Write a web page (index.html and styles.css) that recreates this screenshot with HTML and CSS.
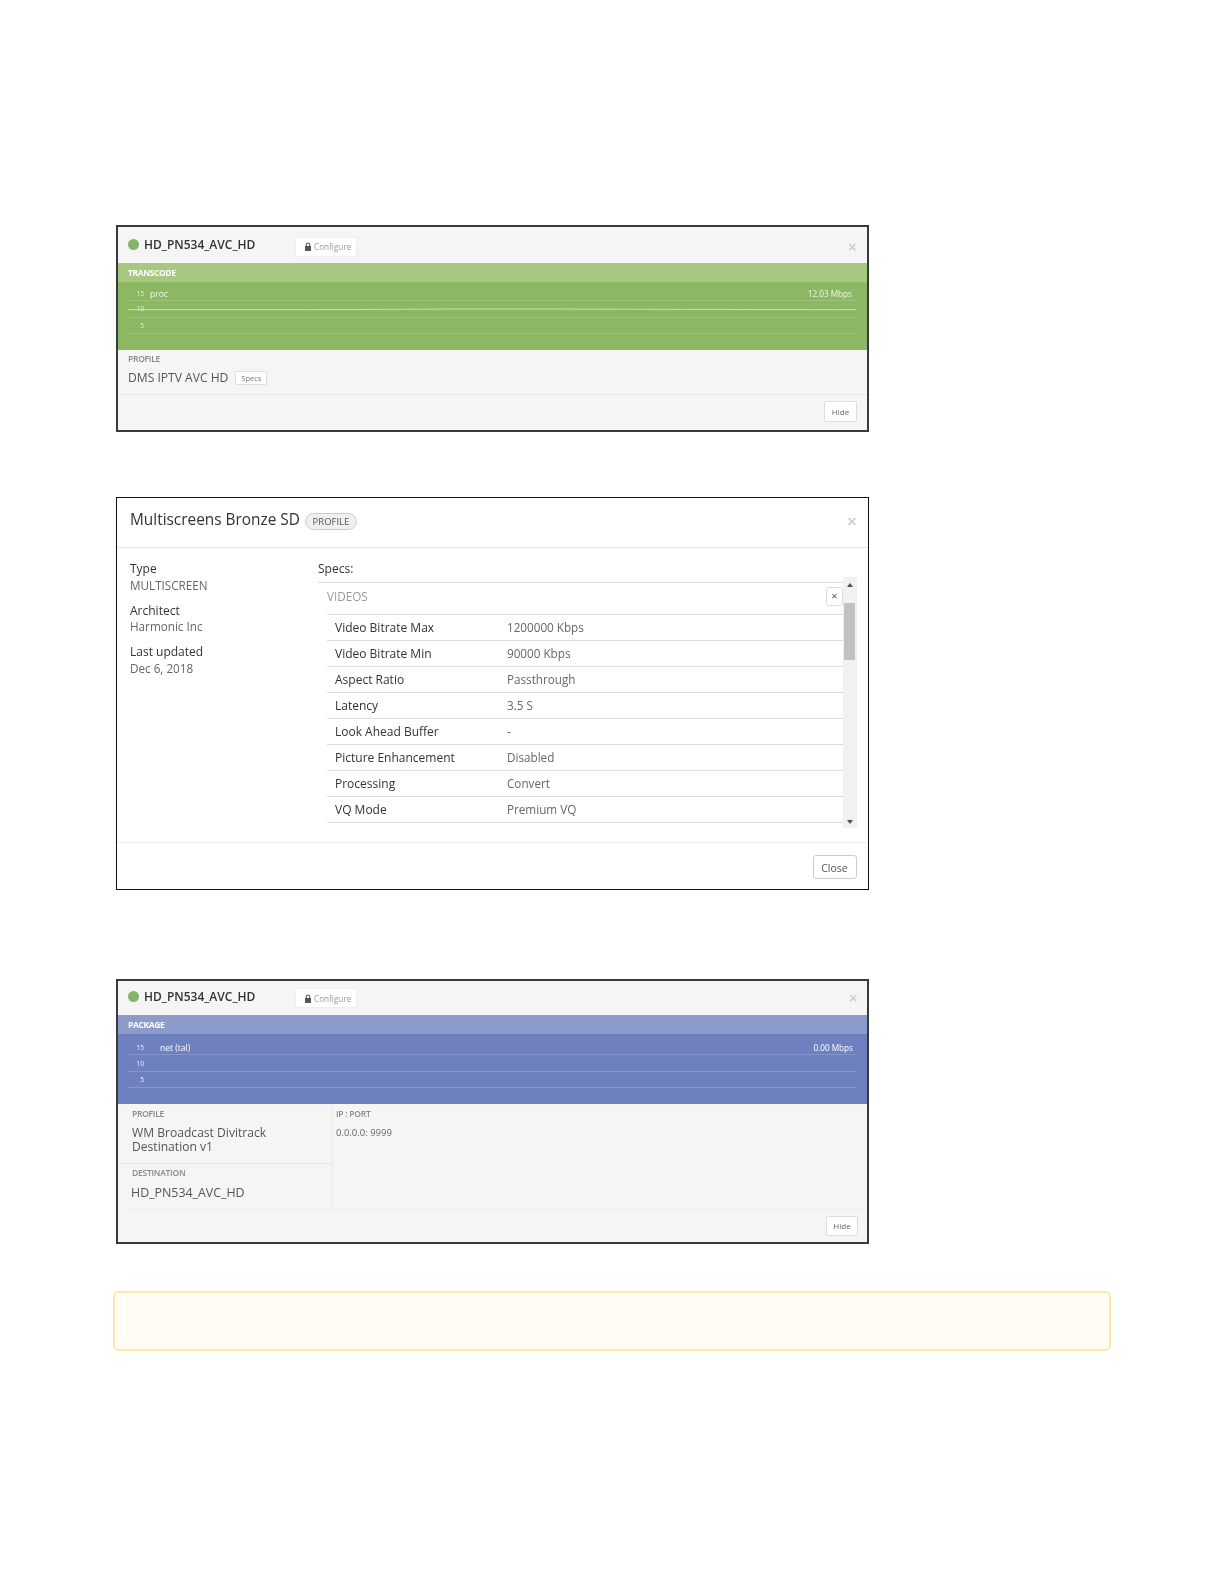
FILE: index.html
```html
<!DOCTYPE html>
<html lang="en">
<head>
<meta charset="utf-8">
<title>Service panels</title>
<link rel="stylesheet" href="styles.css">
</head>
<body>
<main class="page">

  <section class="shot panel panel-transcode">
    <header class="panel-head">
      <span class="dot"></span>
      <span class="panel-title">HD_PN534_AVC_HD</span>
      <span class="config">
        <svg class="lock" viewBox="0 0 8 9"><path d="M1.8 4V2.6a2.2 2.2 0 0 1 4.4 0V4h.8v5H1V4zM2.9 4h2.2V2.6a1.1 1.1 0 0 0-2.2 0z" fill="#555"/></svg>
        Configure
      </span>
      <span class="close">×</span>
    </header>
    <div class="band">TRANSCODE</div>
    <div class="chart">
      <svg class="trace" viewBox="0 0 728 3" preserveAspectRatio="none"><path d="M0 1.6H160C280 1.6 300 .8 400 1C500 1.2 600 1.6 728 1.6" fill="none" stroke="#c9dfae" stroke-width="1"/></svg>
      <div class="grow r1"><span class="tick">15</span><span class="series">proc</span><span class="rate">12.03 Mbps</span></div>
      <div class="grow r2"><span class="tick">10</span></div>
      <div class="grow r3"><span class="tick">5</span></div>
    </div>
    <div class="profile">
      <div class="cap">PROFILE</div>
      <div class="profile-line"><span class="big">DMS IPTV AVC HD</span><span class="specs">Specs</span></div>
    </div>
    <footer class="panel-foot"><span class="hide">Hide</span></footer>
  </section>

  <section class="shot modal">
    <header class="modal-head">
      <h2 class="modal-title">Multiscreens Bronze SD</h2>
      <span class="badge">PROFILE</span>
      <span class="close close-modal">×</span>
    </header>
    <div class="modal-body">
      <div class="meta">
        <dl class="meta-item"><dt>Type</dt><dd>MULTISCREEN</dd></dl>
        <dl class="meta-item"><dt>Architect</dt><dd>Harmonic Inc</dd></dl>
        <dl class="meta-item"><dt>Last updated</dt><dd>Dec 6, 2018</dd></dl>
      </div>
      <div class="specs-col">
        <div class="specs-label">Specs:</div>
        <div class="specs-scroll">
          <div class="specs-content">
            <div class="videos-head"><span>VIDEOS</span><span class="mini-x">×</span></div>
            <div class="row"><span class="k">Video Bitrate Max</span><span class="v">1200000 Kbps</span></div>
            <div class="row"><span class="k">Video Bitrate Min</span><span class="v">90000 Kbps</span></div>
            <div class="row"><span class="k">Aspect Ratio</span><span class="v">Passthrough</span></div>
            <div class="row"><span class="k">Latency</span><span class="v">3.5 S</span></div>
            <div class="row"><span class="k">Look Ahead Buffer</span><span class="v">-</span></div>
            <div class="row"><span class="k">Picture Enhancement</span><span class="v">Disabled</span></div>
            <div class="row"><span class="k">Processing</span><span class="v">Convert</span></div>
            <div class="row"><span class="k">VQ Mode</span><span class="v">Premium VQ</span></div>
          </div>
          <div class="scrollbar">
            <span class="arrow arrow-up"></span>
            <span class="thumb"></span>
            <span class="arrow arrow-down"></span>
          </div>
        </div>
      </div>
    </div>
    <footer class="modal-foot"><span class="btn-close">Close</span></footer>
  </section>

  <section class="shot panel panel-package">
    <header class="panel-head">
      <span class="dot"></span>
      <span class="panel-title">HD_PN534_AVC_HD</span>
      <span class="config">
        <svg class="lock" viewBox="0 0 8 9"><path d="M1.8 4V2.6a2.2 2.2 0 0 1 4.4 0V4h.8v5H1V4zM2.9 4h2.2V2.6a1.1 1.1 0 0 0-2.2 0z" fill="#555"/></svg>
        Configure
      </span>
      <span class="close">×</span>
    </header>
    <div class="band">PACKAGE</div>
    <div class="chart">
      <div class="grow r1"><span class="tick">15</span><span class="series">net (tal)</span><span class="rate">0.00 Mbps</span></div>
      <div class="grow r2"><span class="tick">10</span></div>
      <div class="grow r3"><span class="tick">5</span></div>
    </div>
    <div class="details">
      <div class="details-left">
        <div class="detail-block">
          <div class="cap">PROFILE</div>
          <div class="big wrap">WM Broadcast Divitrack Destination v1</div>
        </div>
        <div class="detail-block dest">
          <div class="cap">DESTINATION</div>
          <div class="big">HD_PN534_AVC_HD</div>
        </div>
      </div>
      <div class="details-right">
        <div class="cap">IP : PORT</div>
        <div class="ip">0.0.0.0: 9999</div>
      </div>
    </div>
    <footer class="panel-foot"><span class="hide">Hide</span></footer>
  </section>

  <aside class="note"></aside>

</main>
</body>
</html>
```

FILE: styles.css
```css
* { box-sizing: border-box; }
html, body { margin: 0; padding: 0; background: #fff; }
body { font-family: "Open Sans", "Liberation Sans", sans-serif; color: #555; height: 1584px; overflow: hidden; }
.page { padding: 225px 113px 0; }

.shot { width: 753px; margin-left: 3px; border: 1px solid #111; background: #fff; }

/* monitoring panels */
.panel { background: #f5f5f5; border-width: 2px; border-color: #3a3a3a; padding: 1px 0 2px; }
.panel > *, .modal > * { filter: blur(0.3px); }
.panel-transcode { height: 207px; margin-bottom: 65px; }
.panel-package { height: 265px; margin-top: 89px; margin-bottom: 47px; }

.panel-head { height: 34.5px; display: flex; align-items: center; padding: 0 0 2px 10px; }
.dot { width: 11px; height: 11px; border-radius: 50%; background: #85b568; margin-right: 5px; }
.panel-title { font-size: 12px; font-weight: 600; color: #333; width: 151px; white-space: nowrap; }
.config { display: flex; align-items: center; gap: 2px; height: 20px; width: 62px; padding-left: 8px; background: #fff; border: 1px solid #eee; border-radius: 2px; font-size: 8.2px; color: #999; margin-top: 5px; }
.lock { width: 8px; height: 9px; }
.close { margin-left: auto; margin-right: 10px; margin-top: 6px; font-size: 16px; line-height: 1; color: #ccc; font-weight: 600; }

.band { height: 19px; line-height: 19px; padding-left: 10px; font-size: 8.5px; font-weight: 700; color: #fff; letter-spacing: -0.4px; }
.chart { height: 68px; padding: 0 10px; position: relative; color: #fff; }
.trace { position: absolute; left: 10px; top: 26px; width: 728px; height: 3px; }
.grow { display: flex; align-items: center; border-bottom: 1px solid rgba(255,255,255,.16); font-size: 8px; }
.tick { width: 16px; text-align: right; font-size: 6.5px; flex: none; opacity: .9; }
.series { margin-left: 6px; font-size: 8.5px; }
.rate { margin-left: auto; margin-right: 5px; font-size: 8.2px; }

.panel-transcode .band { background: #a6c880; }
.panel-transcode .chart { background: #8cb763; color: #f0f7e4; }
.panel-transcode .r1 { height: 19px; padding-top: 6px; }
.panel-transcode .r2 { height: 17px; }
.panel-transcode .r3 { height: 16px; }

.panel-package .panel-head { height: 32.5px; padding-bottom: 3px; }
.panel-package .config { margin-top: 3px; }
.panel-package .close { margin-right: 9px; margin-top: 3px; }
.panel-package .band { background: #8d9bcb; }
.panel-package .chart { background: #6f80c0; height: 70px; }
.panel-package .r1 { height: 21px; padding-top: 8px; }
.panel-package .r2 { height: 17px; padding-top: 1px; }
.panel-package .r3 { height: 16px; padding-top: 1px; }
.panel-package .series { margin-left: 16px; }
.panel-package .rate { margin-right: 4px; }

.cap { font-size: 8.5px; font-weight: 600; color: #888; letter-spacing: -0.25px; line-height: 12px; }
.big { font-size: 12.1px; color: #555; line-height: 14px; }
.wrap { width: 180px; }

.profile { height: 45px; padding: 3px 10px 0; border-bottom: 1px solid #e6e6e6; }
.profile-line { display: flex; align-items: center; gap: 7px; margin-top: 6px; }
.specs { width: 32px; height: 14px; line-height: 12px; text-align: center; font-size: 7.5px; color: #777; background: #fff; border: 1px solid #ddd; border-radius: 2px; }

.panel-foot { display: flex; justify-content: flex-end; padding: 6px 10px 0 0; }
.hide { width: 33px; height: 21px; line-height: 19px; text-align: center; font-size: 8px; color: #666; background: #fff; border: 1px solid #ddd; border-radius: 2px; }

.details { display: flex; height: 105px; }
.details-left { width: 215px; border-right: 1px solid #eaeaea; }
.detail-block { padding: 4px 0 0 14px; }
.detail-block .big { margin-top: 6px; }
.detail-block:first-child { height: 60px; border-bottom: 1px solid #e4e4e4; }
.dest { height: 45px; padding-left: 13px; padding-top: 3px; }
.dest .cap { padding-left: 1px; }
.dest .big { margin-top: 7px; font-size: 12.4px; }
.details-right { padding: 4px 0 0 3px; }
.ip { font-size: 9.5px; color: #666; margin-top: 6px; }
.panel-package .panel-foot { margin-left: 10px; border-top: 1px solid #ececec; padding: 6px 9px 0 0; }
.panel-package .hide { width: 32px; height: 20px; line-height: 18px; }

/* profile modal */
.modal { height: 393px; display: flex; flex-direction: column; }
.modal-head { height: 50px; flex: none; display: flex; align-items: center; padding: 0 0 7px 13px; border-bottom: 1px solid #e5e5e5; }
.modal-title { margin: 0; font-size: 15.4px; font-weight: 500; color: #333; white-space: nowrap; }
.badge { margin-left: 5px; width: 52px; height: 17px; line-height: 15px; text-align: center; font-size: 9.5px; font-weight: 500; color: #555; background: #f0f0f0; border: 1px solid #ccc; border-radius: 9px; margin-top: 4px; }
.close-modal { margin-right: 11px; margin-top: 3px; font-size: 18px; }

.modal-body { flex: 1; display: flex; padding: 12px 0 0 13px; border-bottom: 1px solid #eee; }
.meta { width: 188px; flex: none; }
.meta-item { margin: 0 0 9.5px; font-size: 11.7px; line-height: 16.5px; }
.meta-item dt { color: #333; font-weight: 500; font-size: 12px; margin-top: 1px; line-height: 15.5px; }
.meta-item dd { margin: 0; color: #666; }
.specs-col { flex: 1; min-width: 0; }
.specs-label { font-size: 12px; font-weight: 500; color: #333; line-height: 16.5px; margin-top: 1px; }
.specs-scroll { display: flex; height: 255px; margin-top: -5px; }
.specs-content { width: 525px; margin-top: 9px; border-top: 1px solid #ddd; flex: none; }
.videos-head { height: 32px; margin-left: 9px; display: flex; justify-content: space-between; align-items: center; padding-bottom: 4px; font-size: 11.7px; color: #999; border-bottom: 1px solid #ddd; }
.mini-x { width: 17px; height: 19px; line-height: 16px; text-align: center; font-size: 11px; color: #555; border: 1px solid #ddd; border-radius: 3px; }
.row { margin-left: 9px; height: 26px; display: flex; align-items: center; font-size: 11.7px; border-bottom: 1px solid #ddd; padding-left: 8px; }
.k { width: 172px; font-weight: 500; font-size: 12px; color: #333; flex: none; }
.v { color: #666; }
.scrollbar { width: 14px; flex: none; margin-top: 4px; background: #f1f1f1; display: flex; flex-direction: column; align-items: center; }
.arrow { width: 0; height: 0; border-left: 3.5px solid transparent; border-right: 3.5px solid transparent; }
.arrow-up { border-bottom: 4px solid #505050; margin-top: 6px; }
.arrow-down { border-top: 4px solid #505050; margin-top: auto; margin-bottom: 4px; }
.thumb { width: 11px; height: 57px; background: #c1c1c1; margin-top: 16px; margin-right: 2px; }
.modal-foot { flex: none; height: 46px; display: flex; justify-content: flex-end; align-items: flex-start; padding: 12px 11.5px 0 0; }
.btn-close { width: 44px; height: 24px; line-height: 24px; text-align: center; font-size: 10.5px; color: #555; background: #fff; border: 1px solid #ccc; border-radius: 3px; }

/* empty alert box */
.note { width: 998px; height: 60px; background: #fffcf3; border: 2px solid #fde9ae; border-radius: 5px; }
```
